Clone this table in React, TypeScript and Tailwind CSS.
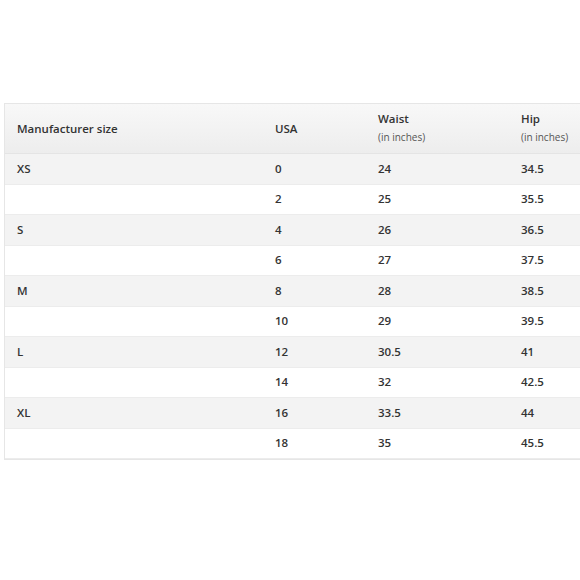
import React from "react";

const rows: [string, string, string, string][] = [
  ["XS", "0", "24", "34.5"],
  ["", "2", "25", "35.5"],
  ["S", "4", "26", "36.5"],
  ["", "6", "27", "37.5"],
  ["M", "8", "28", "38.5"],
  ["", "10", "29", "39.5"],
  ["L", "12", "30.5", "41"],
  ["", "14", "32", "42.5"],
  ["XL", "16", "33.5", "44"],
  ["", "18", "35", "45.5"],
];

export default function App() {
  return (
    <div
      className="w-[580px] h-[580px] overflow-hidden bg-white text-[#333]"
      style={{ fontFamily: '"Open Sans", "Liberation Sans", sans-serif' }}
    >
      <div className="pt-[103px] pl-[4px]">
        <div className="w-[600px] border border-[#e6e6e6] border-r-0">
          <div className="flex h-[50px] bg-gradient-to-b from-[#f8f8f8] to-[#ededed] border-b border-[#e4e4e4] items-center">
            <div className="w-[258px] pl-[12px] text-[11.5px] font-semibold">Manufacturer size</div>
            <div className="w-[103px] pl-[12px] text-[11.5px] font-semibold">USA</div>
            <div className="w-[143px] pl-[12px] flex flex-col leading-[18px] -mt-[2px]">
              <span className="text-[11.5px] font-semibold">Waist</span>
              <span className="text-[10px] text-[#555]">(in inches)</span>
            </div>
            <div className="flex-1 pl-[12px] flex flex-col leading-[18px] -mt-[2px]">
              <span className="text-[11.5px] font-semibold">Hip</span>
              <span className="text-[10px] text-[#555]">(in inches)</span>
            </div>
          </div>
          {rows.map((r, i) => (
            <div
              key={i}
              className={`flex h-[30.5px] items-center border-b border-[#ececec] text-[11.5px] font-semibold pb-[1px] ${
                i % 2 === 0 ? "bg-[#f3f3f3]" : "bg-white"
              }`}
            >
              <div className="w-[258px] pl-[12px]">{r[0]}</div>
              <div className="w-[103px] pl-[12px]">{r[1]}</div>
              <div className="w-[143px] pl-[12px]">{r[2]}</div>
              <div className="flex-1 pl-[12px]">{r[3]}</div>
            </div>
          ))}
        </div>
      </div>
    </div>
  );
}
